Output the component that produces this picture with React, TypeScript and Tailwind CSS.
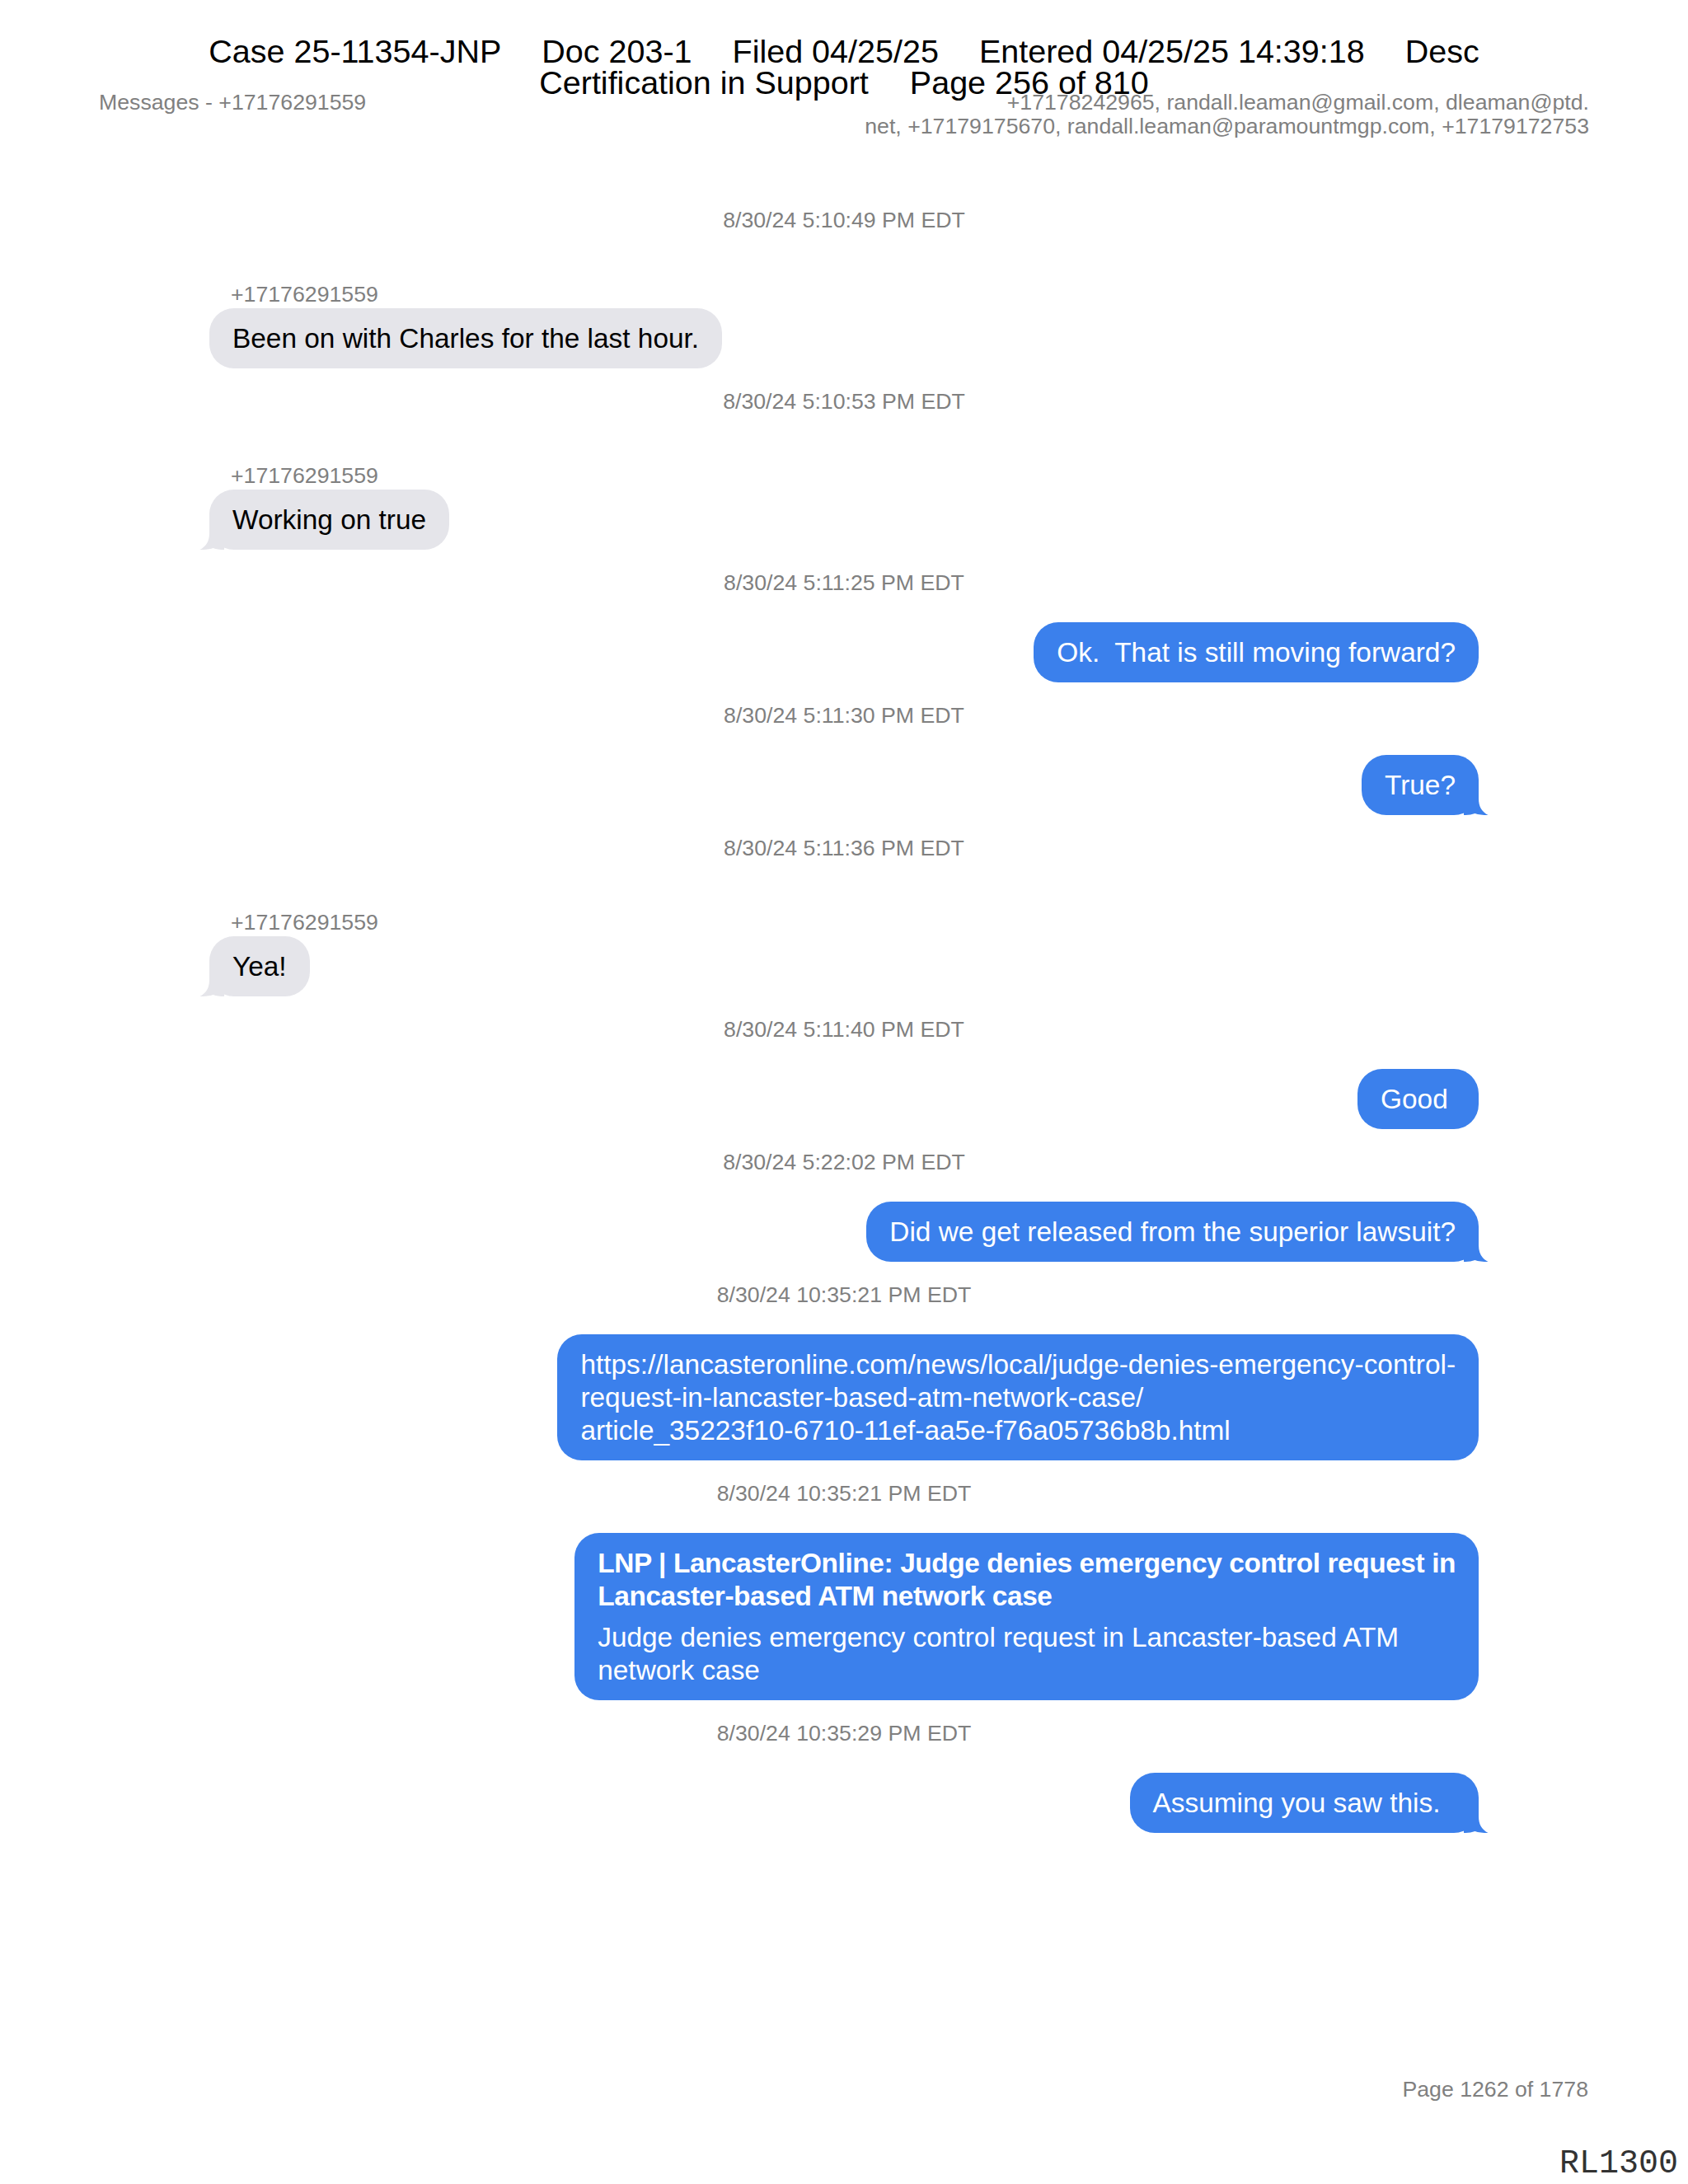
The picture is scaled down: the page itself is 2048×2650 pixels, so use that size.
import React from "react";

type Msg = {
  time: string;
  sender?: string;
  side: "in" | "out";
  tail?: boolean;
  lines?: string[];
  link?: { title: string[]; desc: string[] };
};

const messages: Msg[] = [
  { time: "8/30/24 5:10:49 PM EDT", sender: "+17176291559", side: "in", lines: ["Been on with Charles for the last hour."] },
  { time: "8/30/24 5:10:53 PM EDT", sender: "+17176291559", side: "in", tail: true, lines: ["Working on true"] },
  { time: "8/30/24 5:11:25 PM EDT", side: "out", lines: ["Ok.  That is still moving forward?"] },
  { time: "8/30/24 5:11:30 PM EDT", side: "out", tail: true, lines: ["True?"] },
  { time: "8/30/24 5:11:36 PM EDT", sender: "+17176291559", side: "in", tail: true, lines: ["Yea!"] },
  { time: "8/30/24 5:11:40 PM EDT", side: "out", lines: ["Good "] },
  { time: "8/30/24 5:22:02 PM EDT", side: "out", tail: true, lines: ["Did we get released from the superior lawsuit?"] },
  {
    time: "8/30/24 10:35:21 PM EDT",
    side: "out",
    lines: [
      "https://lancasteronline.com/news/local/judge-denies-emergency-control-",
      "request-in-lancaster-based-atm-network-case/",
      "article_35223f10-6710-11ef-aa5e-f76a05736b8b.html",
    ],
  },
  {
    time: "8/30/24 10:35:21 PM EDT",
    side: "out",
    link: {
      title: ["LNP | LancasterOnline: Judge denies emergency control request in", "Lancaster-based ATM network case"],
      desc: ["Judge denies emergency control request in Lancaster-based ATM", "network case"],
    },
  },
  { time: "8/30/24 10:35:29 PM EDT", side: "out", tail: true, lines: ["Assuming you saw this.  "] },
];

function Tail({ side }: { side: "in" | "out" }) {
  if (side === "out") {
    return (
      <svg className="absolute right-[-12px] bottom-0" width="30" height="30" viewBox="0 0 30 30">
        <path d="M0 0 H18 V10 C18 20 22 26 29.5 30 C23 30 17.5 29.4 13.5 28 C9.5 29.5 5 30 0 30 Z" fill="#3b80ec" />
      </svg>
    );
  }
  return (
    <svg className="absolute left-[-12px] bottom-0" width="30" height="30" viewBox="0 0 30 30">
      <path d="M30 0 H12 V10 C12 20 8 26 0.5 30 C7 30 12.5 29.4 16.5 28 C20.5 29.5 25 30 30 30 Z" fill="#e5e5ea" />
    </svg>
  );
}

function Bubble({ m }: { m: Msg }) {
  const out = m.side === "out";
  return (
    <div
      className={`relative inline-block rounded-[30px] px-[28px] py-[16.5px] text-[33.4px] leading-[40px] whitespace-pre ${
        out ? "bg-[#3b80ec] text-white" : "bg-[#e5e5ea] text-black"
      }`}
    >
      {m.tail && <Tail side={m.side} />}
      <div className="relative">
        {m.lines && m.lines.map((l, i) => <div key={i}>{l}</div>)}
        {m.link && (
          <>
            <div className="font-bold tracking-[-0.4px]">
              {m.link.title.map((l, i) => (
                <div key={i}>{l}</div>
              ))}
            </div>
            <div className="mt-[10px]">
              {m.link.desc.map((l, i) => (
                <div key={i}>{l}</div>
              ))}
            </div>
          </>
        )}
      </div>
    </div>
  );
}

export default function App() {
  return (
    <div className="relative flex h-[2650px] w-[2048px] flex-col bg-white font-['Liberation_Sans',Arial,sans-serif]">
      {/* court filing stamp, printed over the page */}
      <div className="absolute left-0 right-0 top-[43px] text-[39.5px] leading-[38px] text-black">
        <div className="flex justify-center gap-[49px]">
          <span>Case 25-11354-JNP</span>
          <span>Doc 203-1</span>
          <span>Filed 04/25/25</span>
          <span>Entered 04/25/25 14:39:18</span>
          <span>Desc</span>
        </div>
        <div className="flex justify-center gap-[50px]">
          <span>Certification in Support</span>
          <span>Page 256 of 810</span>
        </div>
      </div>

      <div className="flex justify-between px-[120px] pt-[110px] text-[26.7px] leading-[29px] text-[#808080]">
        <div>Messages - +17176291559</div>
        <div className="text-right">
          <div>+17178242965, randall.leaman@gmail.com, dleaman@ptd.</div>
          <div>net, +17179175670, randall.leaman@paramountmgp.com, +17179172753</div>
        </div>
      </div>

      <div className="mx-auto mt-[85px] flex w-[1540px] flex-col">
        {messages.map((m, i) => (
          <div key={i} className={`flex flex-col ${i > 0 ? "mt-[26px]" : ""}`}>
            <div className="text-center text-[26.7px] leading-[29px] text-[#808080]">{m.time}</div>
            {m.sender ? (
              <>
                <div className="mt-[61px] pl-[26px] text-[26.7px] leading-[29px] text-[#808080]">{m.sender}</div>
                <div className="mt-[2px] flex justify-start">
                  <Bubble m={m} />
                </div>
              </>
            ) : (
              <div className={`mt-[33px] flex ${m.side === "out" ? "justify-end" : "justify-start"}`}>
                <Bubble m={m} />
              </div>
            )}
          </div>
        ))}
      </div>

      <div className="mt-auto pb-[4px]">
        <div className="pr-[121px] text-right text-[26.7px] leading-[29px] text-[#808080]">Page 1262 of 1778</div>
        <div className="mt-[56px] pr-[12px] text-right font-['Liberation_Mono',monospace] text-[40px] leading-[40px] text-[#333]">
          RL1300
        </div>
      </div>
    </div>
  );
}
